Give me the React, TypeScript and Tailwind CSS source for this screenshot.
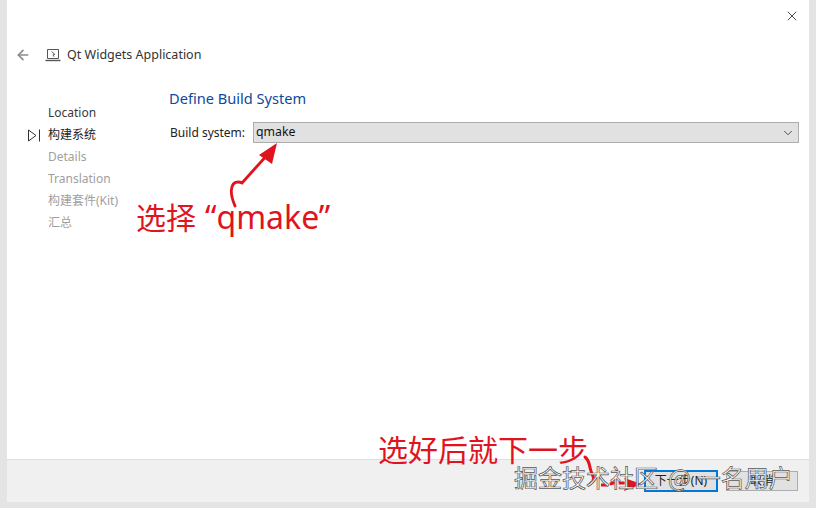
import { ArrowLeft, ChevronDown, X } from "lucide-react";

const STEPS = [
  { label: "Location", className: "text-[#3a3a3a]" },
  { label: "构建系统", className: "text-[#222222]", active: true },
  { label: "Details", className: "text-[#a0a0a0]" },
  { label: "Translation", className: "text-[#a0a0a0]" },
  { label: "构建套件(Kit)", className: "text-[#a0a0a0]" },
  { label: "汇总", className: "text-[#a0a0a0]" },
];

const FONT = "font-['Noto_Sans','Noto_Sans_CJK_SC',sans-serif]";
const CJK = "font-['Noto_Sans_CJK_SC','Noto_Sans',sans-serif]";

function ProjectIcon() {
  return (
    <svg width="16" height="14" viewBox="0 0 16 14" fill="none" stroke="#555555" strokeWidth="1">
      <path d="M2.5 1.5h11v9h-11z" />
      <path d="M0.5 12.5h15" strokeWidth="1.4" />
      <path d="M6.5 3.5l3.5 3-2 .3 1 2" strokeWidth="0.9" />
    </svg>
  );
}

function Annotations() {
  return (
    <svg className="absolute left-0 top-0 pointer-events-none" width="816" height="508" fill="none">
      {/* qmake arrow */}
      <path d="M235 206c-3-7-5-13-3-19 1-5 6-6 10-4l27-30" stroke="#e0141e" strokeWidth="2.8" strokeLinecap="round" />
      <path d="M277 143l-18 12 13 9z" fill="#e0141e" />
      {/* next arrow */}
      <path d="M585 457c5 4 4 9 6 14 1 4 4 6 2 10l-3 3" stroke="#e0141e" strokeWidth="3" strokeLinecap="round" />
      <path d="M601 485l6 0 6-2 12 0" stroke="#e0141e" strokeWidth="3" strokeDasharray="6 3" />
      <path d="M642 484l-18-6 3 6-3 7z" fill="#e0141e" />
    </svg>
  );
}

export default function App() {
  return (
    <div className={`relative w-[816px] h-[508px] overflow-hidden bg-[#e4e4e4] pl-[7px] pr-[7px] pb-[6px] ${FONT}`}>
      <div className="h-full flex flex-col bg-white">
        <div className="flex justify-end pt-[8px] pr-[9px] h-[41px]">
          <X size={16} strokeWidth={1.2} className="text-[#222222]" />
        </div>

        <div className="flex items-center h-[28px] pl-[8px]">
          <ArrowLeft size={16} strokeWidth={2.5} className="text-[#8a8a8a]" />
          <div className="ml-[14px]">
            <ProjectIcon />
          </div>
          <span className="ml-[6px] text-[12.5px] text-[#333333]">Qt Widgets Application</span>
        </div>

        <div className="flex flex-1 pt-[19px]">
          <div className="w-[162px] pt-[14px] shrink-0">
            {STEPS.map((step) => (
              <div key={step.label} className="flex items-center h-[22px]">
                <div className="w-[41px] pl-[21px]">
                  {step.active && (
                    <svg width="13" height="13" viewBox="0 0 13 13" fill="none" stroke="#333333" strokeWidth="1">
                      <path d="M0.5 1v11l7.5-5.5z" />
                      <path d="M11.5 0.5v12" />
                    </svg>
                  )}
                </div>
                <span className={`text-[12px] ${step.className}`}>{step.label}</span>
              </div>
            ))}
          </div>

          <div className="flex-1 pr-[10px]">
            <div className="text-[14.6px] leading-[20px] text-[#0f4a9a]">Define Build System</div>
            <div className="flex items-center mt-[14px]">
              <span className="w-[84px] pl-[1px] text-[12px] text-[#222222]">Build system:</span>
              <div className="flex-1 h-[21px] flex items-center justify-between bg-[#e1e1e1] border border-[#adadad] pl-[2px] pr-[3px]">
                <span className="text-[12.3px] text-[#111111]">qmake</span>
                <ChevronDown size={14} strokeWidth={1.4} className="text-[#333333]" />
              </div>
            </div>
          </div>
        </div>

        <div className="h-[43px] flex items-center justify-end gap-[8px] bg-[#f0f0f0] border-t border-[#dfdfdf] pr-[11px]">
          <div className="w-[74px] h-[22px] flex items-center justify-center bg-[#e1e1e1] border-2 border-[#0078d7] text-[12px] text-[#222222]">
            下一步(N)
          </div>
          <div className="w-[72px] h-[20px] flex items-center justify-center bg-[#e1e1e1] border border-[#adadad] text-[12px] text-[#222222]">
            取消
          </div>
        </div>
      </div>

      <Annotations />

      <div className={`absolute left-[136px] top-[197px] text-[30px] leading-[38px] text-[#e0141e] whitespace-nowrap ${CJK}`}>
        选择
        <span className="ml-[9px] text-[32px] font-['Noto_Sans',sans-serif]">“qmake”</span>
      </div>
      <div className={`absolute left-[378px] top-[429px] text-[30px] leading-[38px] text-[#e0141e] whitespace-nowrap ${CJK}`}>
        选好后就下一步
      </div>
      <div
        className={`absolute left-[514px] top-[460px] flex items-center gap-[6px] text-[24px] leading-[34px] text-white whitespace-nowrap [-webkit-text-stroke:0.7px_#555555] ${CJK}`}
      >
        <span>掘金技术社区</span>
        <span className="ml-[4px]">@</span>
        <span>一名用户</span>
      </div>
    </div>
  );
}
